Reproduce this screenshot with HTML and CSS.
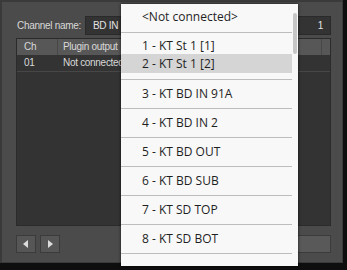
FILE: index.html
```html
<!DOCTYPE html>
<html>
<head>
<meta charset="utf-8">
<link rel="stylesheet" href="styles.css">
</head>
<body>
<div class="win">
  <div class="toprow">
    <span class="lbl">Channel name:</span>
    <div class="field name">BD IN St 1</div>
    <div class="field num">1</div>
  </div>
  <div class="table">
    <div class="thead">
      <div class="c1">Ch</div>
      <div class="c2">Plugin output</div>
      <div class="c3"></div>
    </div>
    <div class="trow">
      <div class="c1">01</div>
      <div class="c2">Not connected</div>
      <div class="c3"></div>
    </div>
  </div>
  <div class="bottom">
    <div class="nav"><svg width="6" height="8" viewBox="0 0 6 8"><polygon points="5,0 5,8 0,4" fill="#dcdcdc"/></svg></div>
    <div class="nav"><svg width="6" height="8" viewBox="0 0 6 8"><polygon points="1,0 1,8 6,4" fill="#dcdcdc"/></svg></div>
    <div class="spacer"></div>
    <div class="wide"></div>
  </div>
  <div class="popup">
    <div class="list">
      <div class="item nc">&lt;Not connected&gt;</div>
      <div class="group">
        <div class="item g1">1 - KT St 1 [1]</div>
        <div class="item g2 sel">2 - KT St 1 [2]</div>
      </div>
      <div class="item">3 - KT BD IN 91A</div>
      <div class="item">4 - KT BD IN 2</div>
      <div class="item">5 - KT BD OUT</div>
      <div class="item">6 - KT BD SUB</div>
      <div class="item">7 - KT SD TOP</div>
      <div class="item">8 - KT SD BOT</div>
      <div class="item"></div>
    </div>
    <div class="thumb"></div>
  </div>
</div>
</body>
</html>
```
FILE: styles.css
```css
html, body {
  margin: 0;
  padding: 0;
  background: #0e0e0e;
  width: 347px;
  height: 270px;
  overflow: hidden;
}
.win {
  position: relative;
  box-sizing: border-box;
  width: 343px;
  height: 263px;
  background: #4b4b4b;
  border: 1px solid #3a3a3a;
  border-width: 2px 1px 1px 2px;
  padding: 14px 11px 0 14px;
  font-family: "Liberation Sans", Arial, sans-serif;
  font-size: 10px;
  letter-spacing: -0.3px;
  color: #d9d9d9;
}
.toprow {
  display: flex;
  height: 19px;
  align-items: stretch;
  margin-bottom: 3px;
}
.lbl {
  width: 69px;
  line-height: 19px;
  padding-left: 1px;
  box-sizing: border-box;
  white-space: nowrap;
}
.field {
  box-sizing: border-box;
  background: #333333;
  border: 1px solid #2a2a2a;
  line-height: 17px;
  color: #e2e2e2;
  white-space: nowrap;
  overflow: hidden;
}
.name {
  flex: 1;
  padding-left: 7px;
}
.num {
  width: 37px;
  margin-left: 4px;
  text-align: right;
  padding-right: 7px;
}
.table {
  box-sizing: border-box;
  height: 188px;
  background: #333333;
  border: 1px solid #2b2b2b;
}
.thead, .trow {
  display: flex;
  height: 16px;
  line-height: 16px;
  white-space: nowrap;
}
.thead {
  background: #575757;
}
.trow {
  border-bottom: 1px solid #474747;
}
.c1 {
  width: 41px;
  padding-left: 7px;
  box-sizing: border-box;
}
.thead .c1 {
  border-right: 1px solid #474747;
}
.c2 {
  flex: 1;
  padding-left: 5px;
}
.c3 {
  width: 8px;
}
.thead .c3 {
  border-left: 1px solid #474747;
}
.bottom {
  display: flex;
  height: 18px;
  margin-top: 9px;
  gap: 4px;
}
.nav {
  box-sizing: border-box;
  width: 20px;
  height: 18px;
  background: #565656;
  border: 1px solid #3b3b3b;
  display: flex;
  align-items: center;
  justify-content: center;
}
.spacer {
  flex: 1;
}
.wide {
  box-sizing: border-box;
  width: 131px;
  background: #595959;
  border: 1px solid #3b3b3b;
}
.popup {
  position: absolute;
  left: 119px;
  top: 2px;
  width: 177px;
  height: 262px;
  background: #f8f8f8;
  box-shadow: 0 0 3px rgba(0, 0, 0, 0.7);
  overflow: hidden;
  font-family: "Open Sans", "Noto Sans", sans-serif;
  font-size: 12px;
  letter-spacing: 0;
  color: #1f1f1f;
}
.list {
  width: 171px;
}
.item {
  box-sizing: border-box;
  height: 29px;
  line-height: 28px;
  padding-left: 21px;
  border-bottom: 1px solid #bdbdbd;
  white-space: nowrap;
}
.nc {
  height: 29px;
  line-height: 26px;
}
.group {
  height: 46px;
  border-bottom: 1px solid #bdbdbd;
}
.item.g1 {
  border: none;
  height: 21px;
  line-height: 26px;
}
.item.g2 {
  border: none;
  height: 19px;
  line-height: 19px;
}
.sel {
  background: #d5d5d5;
}
.thumb {
  position: absolute;
  left: 172px;
  top: 9px;
  width: 4px;
  height: 41px;
  background: #c6c6c6;
  border-radius: 2px;
}
```
